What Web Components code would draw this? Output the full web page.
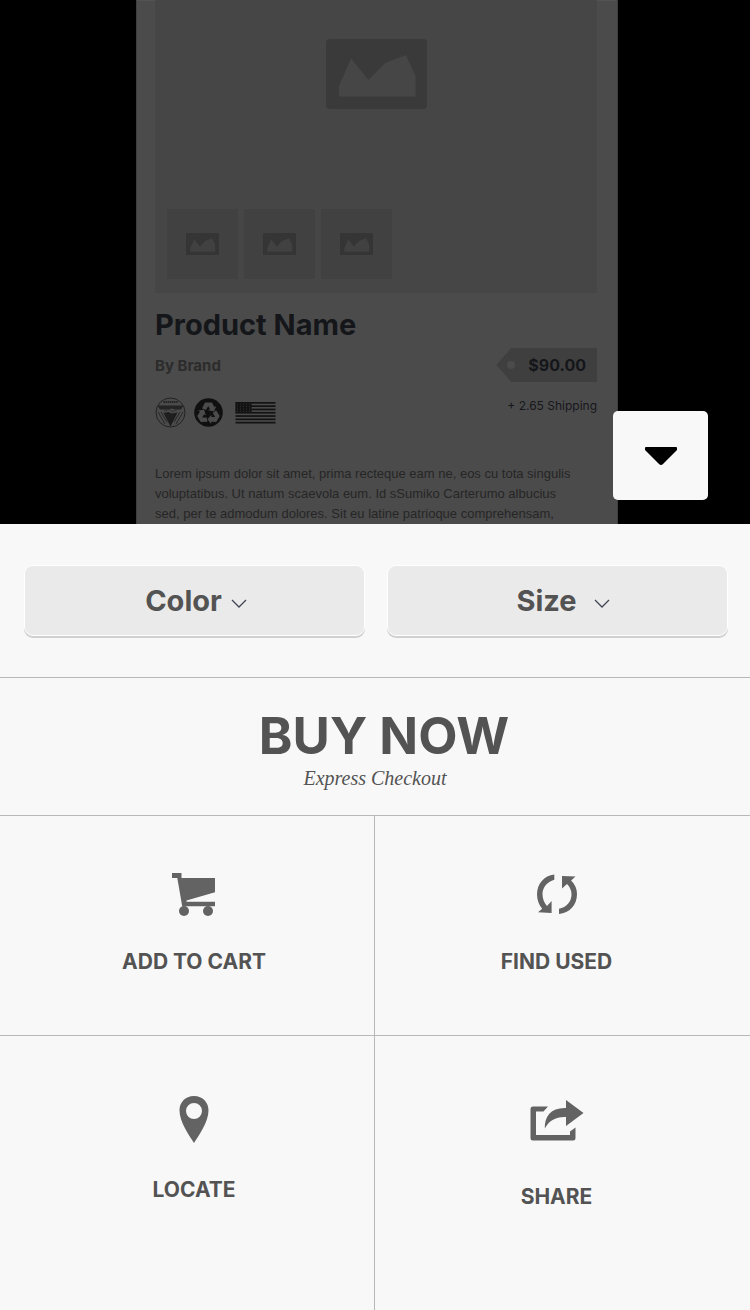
<!DOCTYPE html>
<html lang="en">
<head>
<meta charset="utf-8">
<meta name="viewport" content="width=device-width, initial-scale=1">
<title>Product Name</title>
<style>
  html, body { margin: 0; background: #f8f8f8; }
  body {
    min-height: 100vh;
    display: flex;
    flex-direction: column;
    font-family: Inter, "Open Sans", sans-serif;
    color: #535353;
  }
  buy-sheet { flex: 1; }
</style>
</head>
<body>
<product-preview>
  <span slot="name">Product Name</span>
  <span slot="brand">By Brand</span>
  <span slot="price">$90.00</span>
  <span slot="shipping">+ 2.65 Shipping</span>
  <span slot="text">Lorem ipsum dolor sit amet, prima recteque eam ne, eos cu tota singulis voluptatibus. Ut natum scaevola eum. Id sSumiko Carterumo albucius sed, per te admodum dolores. Sit eu latine patrioque comprehensam,</span>
</product-preview>
<buy-sheet>
  <option-picker slot="options" label="Color" choices="Black,Grey,White"></option-picker>
  <option-picker slot="options" label="Size" choices="Small,Medium,Large"></option-picker>
  <buy-now slot="buy">BUY NOW<span slot="note">Express Checkout</span></buy-now>
  <action-tile slot="actions" icon="cart">ADD TO CART</action-tile>
  <action-tile slot="actions" icon="used">FIND USED</action-tile>
  <action-tile slot="actions" icon="pin">LOCATE</action-tile>
  <action-tile slot="actions" icon="share">SHARE</action-tile>
</buy-sheet>

<script>
class Base extends HTMLElement {
  connectedCallback() {
    if (this.shadowRoot) return;
    this.attachShadow({ mode: "open" }).innerHTML = this.render();
  }
}

customElements.define("picture-icon", class extends Base {
  render() {
    return `<style>
      :host { display: block; }
      svg { display: block; width: 100%; }
    </style>
    <svg viewBox="0 0 101 70" aria-hidden="true">
      <path fill="currentColor" fill-rule="evenodd" d="M4 0h93a4 4 0 0 1 4 4v62a4 4 0 0 1-4 4H4a4 4 0 0 1-4-4V4a4 4 0 0 1 4-4ZM13 57.500h76.500V37L80 16 59 24 42.500 41 25 19.500 13 47Z"/>
    </svg>`;
  }
});

customElements.define("price-tag", class extends Base {
  render() {
    return `<style>
      :host { display: block; color: #15161a; }
      .tag {
        display: flex; align-items: center; gap: 13px;
        box-sizing: border-box; height: 34px;
        padding: 0 11px;
        background: #3f3f3f;
        clip-path: polygon(0 50%, 15px 0, 100% 0, 100% 100%, 15px 100%);
        font-size: 16px; line-height: 20px; font-weight: 700;
      }
      i { width: 8px; height: 8px; border-radius: 50%; background: #4b4b4b; }
    </style>
    <div class="tag"><i></i><slot></slot></div>`;
  }
});

customElements.define("product-badges", class extends Base {
  render() {
    const stars = [0, 1, 2, 3].map(r => [0, 1, 2, 3, 4].map(c =>
      `<circle cx="${2 + c * 3}" cy="${2 + r * 2.5}" r=".6"/>`).join("")).join("");
    const stripes = [0, 1, 2, 3, 4, 5, 6].map(i =>
      `<rect y="${i * 3.3}" width="40" height="1.7"/>`).join("");
    const arrow = `<path d="M8 10.500 11 4.500h7L20.300 9l2-1-2.300 5.500-6-1.200 2-1-1.800-3.300-2.200 4Z"/>`;
    return `<style>
      :host { display: flex; align-items: center; color: #161616; }
      svg { display: block; }
      .recycle { margin-left: 8px; }
      .flag { margin-left: 12px; }
    </style>
    <svg width="31" height="31" viewBox="0 0 31 31" role="img" aria-label="Certified">
      <circle cx="15.500" cy="15.500" r="14.500" fill="none" stroke="#222"/>
      <path d="M8.500 5h14" stroke="#242424" stroke-width="2" stroke-dasharray="1.500 .6"/>
      <path d="M2.500 8.500h26l-2.500 4H20l-3-1-4 1H5Z" fill="#242424"/>
      <path d="m3 15 7 12m-4-12 6 10M28 15l-7 12m4-12-6 10" fill="none" stroke="#262626"/>
      <path d="m8.500 16 5-1 3 1.500 6-1-7 14Z" fill="#1e1e1e"/>
      <path d="m9 14 5-1.500 3 2 5-1.500" fill="none" stroke="#333"/>
    </svg>
    <svg class="recycle" width="29" height="29" viewBox="0 0 29 29" role="img" aria-label="Recyclable">
      <circle cx="14.500" cy="14.500" r="14.300" fill="#101010"/>
      <g fill="#4b4b4b">${arrow}
        <g transform="rotate(120 14.500 15.500)">${arrow}</g>
        <g transform="rotate(240 14.500 15.500)">${arrow}</g>
      </g>
    </svg>
    <svg class="flag" width="41" height="22" viewBox="0 0 40 22" role="img" aria-label="Made in USA">
      <g fill="#131313">${stripes}<rect width="16" height="11"/></g>
      <g fill="#333">${stars}</g>
    </svg>`;
  }
});

customElements.define("product-preview", class extends Base {
  render() {
    return `<style>
      :host {
        position: relative;
        display: grid;
        grid-template-columns: minmax(0, 136fr) minmax(0, 482fr) minmax(0, 132fr);
        background: #000;
      }
      article {
        grid-column: 2;
        box-sizing: border-box;
        padding: 0 20px 0 18px;
        background: #4b4b4b;
        border: 1px solid #3e3e3e;
        border-width: 0 1px;
        box-shadow: inset 0 1px #535353;
      }
      .gallery {
        display: flex; flex-direction: column; justify-content: space-between;
        box-sizing: border-box; min-height: 293px;
        padding: 39px 12px 14px;
        background: #464646;
        color: #3a3a3a;
      }
      .main { width: 101px; align-self: center; }
      .thumbs { display: flex; gap: 6px; margin: 0; padding: 0; list-style: none; }
      .thumbs li {
        display: grid; place-content: center;
        width: 71px; height: 70px;
        background: #414141; color: #353535;
      }
      .thumbs picture-icon { width: 33px; }
      h1 {
        margin: 14px 0 0; color: #14161a;
        font-size: 29px; line-height: 36px; font-weight: 700;
      }
      .row { display: flex; justify-content: space-between; }
      .brand { margin-top: 13px; color: #2c2c2c; font-size: 15px; line-height: 20px; font-weight: 700; }
      price-tag { margin-top: 5px; }
      .shipping { margin-top: 16px; color: #16171b; font-size: 12px; line-height: 16px; }
      product-badges { margin-top: 15px; }
      p {
        margin: 36px 0 0; padding-right: 20px; color: #262626;
        font: 13px/20px "Liberation Sans", Arial, sans-serif;
      }
      button {
        position: absolute; right: 42px; bottom: 24px;
        display: grid; place-content: center;
        width: 95px; height: 89px; padding: 0;
        border: 0; border-radius: 5px;
        background: #f8f8f8; color: #000;
      }
    </style>
    <article>
      <div class="gallery">
        <picture-icon class="main"></picture-icon>
        <ul class="thumbs">
          <li><picture-icon></picture-icon></li>
          <li><picture-icon></picture-icon></li>
          <li><picture-icon></picture-icon></li>
        </ul>
      </div>
      <h1><slot name="name"></slot></h1>
      <div class="row">
        <div class="brand"><slot name="brand"></slot></div>
        <price-tag><slot name="price"></slot></price-tag>
      </div>
      <div class="row">
        <product-badges></product-badges>
        <div class="shipping"><slot name="shipping"></slot></div>
      </div>
      <p><slot name="text"></slot></p>
    </article>
    <button type="button" aria-label="Close">
      <svg width="32" height="18" viewBox="0 0 32 18" aria-hidden="true">
        <path d="M1 0h30q1 0 1 1v2L18 17q-2 2-4 0L0 3V1q0-1 1-1Z"/>
      </svg>
    </button>`;
  }
});

customElements.define("option-picker", class extends Base {
  render() {
    const label = this.getAttribute("label");
    const choices = this.getAttribute("choices").split(",");
    return `<style>
      :host { display: grid; align-items: center; justify-items: center; }
      select, svg { grid-area: 1 / 1; }
      select {
        appearance: none;
        box-sizing: border-box; width: 100%; height: 71px;
        margin: 0; padding: 0 22px 0 0;
        border: 1px solid #fff; border-radius: 9px;
        background: #eaeaea; color: #535353;
        box-shadow: 0 2px #d0d0d0;
        font: 700 29px/36px Inter, "Open Sans", sans-serif;
        text-align: center; text-align-last: center;
      }
      option { font-size: 16px; }
      svg { margin-left: 88px; margin-top: 6px; pointer-events: none; }
    </style>
    <select aria-label="${label}">
      <option value="" selected>${label}</option>
      ${choices.map(c => `<option>${c}</option>`).join("")}
    </select>
    <svg width="16" height="10" viewBox="0 0 16 10" fill="none" stroke="#404652" stroke-width="1.300" aria-hidden="true"><path d="m1 1 7 7 7-7"/></svg>`;
  }
});

customElements.define("buy-now", class extends Base {
  render() {
    return `<style>
      :host { display: block; }
      button {
        display: flex; flex-direction: column;
        width: 100%; margin: 0; padding: 28px 0 25px;
        border: 0; background: none; color: inherit;
        font: inherit; text-align: center;
      }
      strong { padding-left: 18px; font-size: 51px; line-height: 60px; font-weight: 700; }
      em { font: italic 20px/24px "Liberation Serif", "Times New Roman", serif; }
    </style>
    <button type="button"><strong><slot></slot></strong><em><slot name="note"></slot></em></button>`;
  }
});

const ICONS = {
  cart: `<svg width="44" height="44" viewBox="0 0 44 44"><path d="M0 0h9.500v5H43v14.200L14.500 27.500v1.200H43v4.500H10.200L5.300 5H0Z"/><circle cx="12" cy="38" r="5"/><circle cx="36" cy="38" r="5"/></svg>`,
  used: `<svg width="42" height="44" viewBox="0 0 42 44"><path d="M18.300 1.500v5.200C11 8.500 6.500 15 6.500 21c0 5 1.800 9 4.500 12l4.600-5V40L2 39.200l4.200-3.400C3 32 1 27 1 21.500 1 11 8 2.500 18.300 1.500ZM26 3l13.500.6-4.400 3.800C39 11 41 16 41 21 41 32 33.500 40 23 41v-5.200C30.500 34.500 35.500 28.500 35.500 21.500c0-4-1.500-7.500-4.500-10.500L26 15.500Z"/></svg>`,
  pin: `<svg width="30" height="49" viewBox="0 0 30 49"><path fill-rule="evenodd" d="M15 0C24 0 29.500 6.500 29.500 14.500 29.500 26 20 39 15 47 10 39 .5 26 .5 14.500.5 6.500 6 0 15 0Zm0 7a8 8 0 1 0 0 16 8 8 0 0 0 0-16Z"/></svg>`,
  share: `<svg width="54" height="56" viewBox="0 0 54 56"><path d="M18 10.500 13.500 15.500H6V39H40V35.500L45.500 31.500V42a2.500 2.500 0 0 1-2.500 2.500H3A2.500 2.500 0 0 1 .5 42V13A2.500 2.500 0 0 1 3 10.500ZM36 4 53.500 17 36 30V21C26 20.500 19 24.500 14.800 32.500 14.500 20 21 11.500 36 12Z"/></svg>`
};

customElements.define("action-tile", class extends Base {
  render() {
    return `<style>
      :host { display: grid; }
      button {
        display: flex; flex-direction: column; align-items: center; gap: 33px;
        width: 100%; margin: 0;
        padding: var(--tile-top) var(--tile-right, 0) 61px var(--tile-left, 0);
        border: 0; background: none; color: inherit;
        font: 700 21px/24px Inter, "Open Sans", sans-serif;
      }
      svg { display: block; fill: #636363; }
    </style>
    <button type="button">${ICONS[this.getAttribute("icon")]}<span><slot></slot></span></button>`;
  }
});

customElements.define("buy-sheet", class extends Base {
  render() {
    return `<style>
      :host { display: flex; flex-direction: column; background: #f8f8f8; }
      .options {
        display: grid; grid-template-columns: 1fr 1fr; gap: 22px;
        padding: 41px 22px 41px 24px;
        border-bottom: 1px solid #b8b8b8;
      }
      .buy { border-bottom: 1px solid #b8b8b8; }
      .actions {
        flex: 1;
        display: grid; grid-template-columns: 1fr 1fr; grid-template-rows: auto 1fr;
      }
      ::slotted(action-tile) { --tile-top: 60px; }
      ::slotted(action-tile:nth-of-type(-n+2)) { --tile-top: 57px; border-bottom: 1px solid #b8b8b8; }
      ::slotted(action-tile:nth-of-type(odd)) { --tile-left: 14px; border-right: 1px solid #b8b8b8; }
      ::slotted(action-tile:nth-of-type(even)) { --tile-right: 12px; }
    </style>
    <div class="options"><slot name="options"></slot></div>
    <div class="buy"><slot name="buy"></slot></div>
    <div class="actions"><slot name="actions"></slot></div>`;
  }
});
</script>
</body>
</html>
